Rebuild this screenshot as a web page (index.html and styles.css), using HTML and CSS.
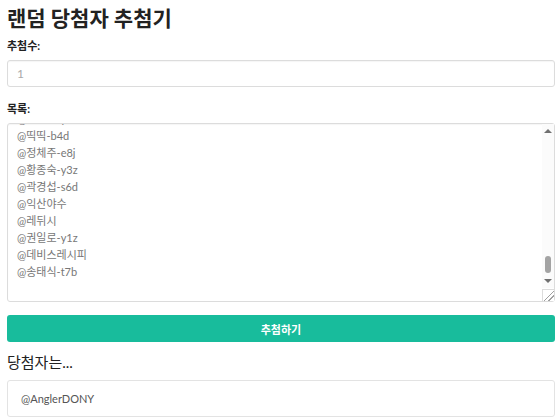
FILE: index.html
```html
<!DOCTYPE html>
<html lang="ko">
<head>
  <meta charset="UTF-8">
  <meta name="viewport" content="width=device-width, initial-scale=1.0">
  <title>랜덤 당첨자 추첨기</title>
  <link rel="stylesheet" href="styles.css">
</head>
<body>
  <div class="container">
    <h1>랜덤 당첨자 추첨기</h1>
    <form onsubmit="return false;">
      <label for="count">추첨수:</label>
      <input id="count" class="field" type="number" placeholder="1">
      <label for="list">목록:</label>
      <div class="list-wrap">
        <textarea id="list" class="field list">@김도윤-a1k
@이서연-p9q
@박지호
@최민준-k2m
@정하은-z7x
@강시우
@조예린-w3e
@윤서준-r5t
@장하람
@임도현-u8i
@한지민-o1p
@오세훈-q4w
@서지안
@신유나-e6r
@권태민-t2y
@황보람-y9u
@안주원
@송민서-i3o
@전우진-p5a
@홍다인-s7d
@유건우
@고은비-f1g
@문하준-h4j
@양소율-j6k
@손지우
@배현서-l8z
@백승민-x2c
@허윤아-c5v
@남궁별
@노시현-v7b
@심재원-b3n
@하늘빛-n6m
@곽민재
@성수아-m1q
@차도훈-w4e
@주예준-e8r
@우하린
@구나연-r2t
@민경호-t5y
@진소희-y7u
@나봄
@엄태양-u9i
@채윤서-i1o
@원지훈-o3p
@천유진
@방서윤-a6s
@공민호-s8d
@현지수-d2f
@띵띵
@함은우-f4g
@변서아-g6h
@염동현-h8j
@여름비
@추하늘-j1k
@도민기-k3l
@소예은-l5z
@석진우
@선다은-z7x
@설지호-x9c
@마준서-c1v
@류하진-q2w
@표은서-w5e
@기민성
@탁지혜-e7r
@피수빈-r9t
@봄바람
@제갈윤-t1y
@인서희-y3u
@띡띡-b4d
@정체주-e8j
@황종숙-y3z
@곽경섭-s6d
@익산야수
@레뒤시
@권일로-y1z
@데비스레시피
@송태식-t7b
</textarea>
        <div class="scrollbar" aria-hidden="true">
          <span class="arrow up"></span>
          <span class="track"><span class="thumb"></span></span>
          <span class="arrow down"></span>
        </div>
        <div class="corner" aria-hidden="true"></div>
      </div>
      <button type="submit" class="draw-btn">추첨하기</button>
    </form>
    <h2>당첨자는...</h2>
    <div class="result">@AnglerDONY</div>
  </div>
  <script>
    var list = document.getElementById("list");
    list.scrollTop = list.scrollHeight;
  </script>
</body>
</html>
```

FILE: styles.css
```css
body {
  margin: 0;
  font-family: "Lato", "Noto Sans CJK KR", sans-serif;
  color: #222;
  background: #fff;
}
.container {
  width: 548px;
  margin-left: 7px;
}
h1 {
  margin: 0;
  padding-top: 2px;
  font-size: 21px;
  line-height: 31px;
  font-weight: bold;
}
form {
  display: flex;
  flex-direction: column;
}
label {
  font-size: 11px;
  font-weight: bold;
  line-height: 16px;
  margin-top: 5px;
  margin-bottom: 6px;
}
.field {
  box-sizing: border-box;
  width: 100%;
  margin: 0;
  border: 1px solid #dcdcdc;
  border-radius: 3px;
  box-shadow: inset 0 1px 1px rgba(0, 0, 0, 0.04);
  font-family: "Lato", "Noto Sans CJK KR", sans-serif;
  color: #777;
  background: #fff;
  outline: none;
}
#count {
  height: 27px;
  padding: 0 9px;
  font-size: 12px;
  margin-bottom: 9px;
}
#count::placeholder {
  color: #aaa;
}
.list-wrap {
  position: relative;
  height: 179px;
}
.list {
  display: block;
  height: 179px;
  padding: 4px 9px;
  font-size: 11px;
  line-height: 17px;
  resize: none;
}

/* drawn scrollbar, the headless browser hides the real one */
.scrollbar {
  position: absolute;
  top: 1px;
  right: 1px;
  bottom: 14px;
  width: 12px;
  display: flex;
  flex-direction: column;
  background: #fbfbfb;
}
.arrow {
  flex: none;
  height: 14px;
  display: flex;
  justify-content: center;
  align-items: center;
}
.arrow::before {
  content: "";
  width: 0;
  height: 0;
  border-left: 4px solid transparent;
  border-right: 4px solid transparent;
}
.arrow.up::before {
  border-bottom: 4px solid #707070;
}
.arrow.down::before {
  border-top: 4px solid #707070;
}
.track {
  flex: 1;
  display: flex;
  flex-direction: column;
  justify-content: flex-end;
  align-items: center;
  padding-bottom: 1px;
}
.thumb {
  width: 6px;
  height: 17px;
  border-radius: 3px;
  background: #a3a3a3;
}
.corner {
  position: absolute;
  right: 1px;
  bottom: 1px;
  width: 11px;
  height: 11px;
  border-top: 1px solid #dcdcdc;
  border-left: 1px solid #dcdcdc;
  background: linear-gradient(135deg, transparent 52%, #a0a0a0 52%, #a0a0a0 58%, transparent 58%, transparent 72%, #a0a0a0 72%, #a0a0a0 78%, transparent 78%), #fff;
}
.draw-btn {
  margin-top: 13px;
  height: 27px;
  border: none;
  border-radius: 3px;
  background-color: #18bc9c;
  color: #fff;
  font-family: "Lato", "Noto Sans CJK KR", sans-serif;
  font-size: 11px;
  font-weight: bold;
  cursor: pointer;
}
h2 {
  margin: 10px 0 7px;
  font-size: 15px;
  line-height: 21px;
  font-weight: normal;
}
.result {
  box-sizing: border-box;
  height: 37px;
  padding: 0 13px;
  border: 1px solid #e3e3e3;
  border-radius: 3px;
  font-size: 11px;
  line-height: 35px;
  color: #555;
}
```
